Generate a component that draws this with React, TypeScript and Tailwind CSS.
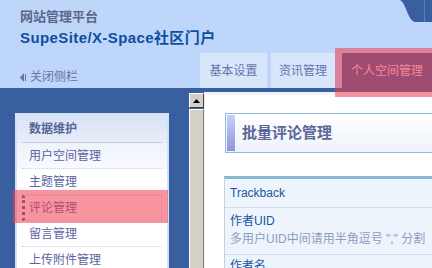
const font = "font-['Liberation_Sans','Noto_Sans_CJK_SC',sans-serif]";

const menu = [
  { label: "用户空间管理" },
  { label: "主题管理" },
  { label: "评论管理", active: true },
  { label: "留言管理" },
  { label: "上传附件管理" },
];

function Header() {
  return (
    <div className="h-[88px] bg-[#BED6FA] flex">
      <div className="w-[200px] shrink-0 pl-5 flex flex-col">
        <div className="pt-[9px] text-[13px] font-bold leading-[16px] text-[#5A6888]">
          网站管理平台
        </div>
        <div className="mt-[4px] text-[15px] font-bold leading-[18px] tracking-[0.4px] text-[#0E4FA2] whitespace-nowrap">
          SupeSite/X-Space社区门户
        </div>
        <div className="mt-auto mb-[3px] flex items-center gap-[3px] text-[12px] leading-[16px] text-[#6674A8]">
          <svg width="7" height="9" viewBox="0 0 7 9">
            <polygon points="4,0 4,9 0,4.5" fill="#6674A8" />
            <rect x="5" y="1" width="1" height="7" fill="#6674A8" />
          </svg>
          关闭侧栏
        </div>
      </div>
      <div className="flex-1 flex flex-col">
        <div className="h-[53px] flex justify-end">
          <svg width="32" height="23" viewBox="0 0 32 23">
            <path
              d="M0 0 C4 2 6 10 9 16 C11 20 13 22 16 22 L32 22 L32 0 Z"
              fill="#3A5FA0"
            />
            <rect x="24" y="0" width="1" height="22" fill="#5A7CBA" />
          </svg>
        </div>
        <div className="h-[35px] flex text-[12px] text-[#6674A8]">
          <div className="w-[67px] bg-[#D8E6FC] flex items-center justify-center">
            基本设置
          </div>
          <div className="ml-1 w-[64px] bg-[#D8E6FC] flex items-center justify-center">
            资讯管理
          </div>
          <div className="ml-[7px] flex-1 bg-[#3A5FA0] text-[#FFE0E8] flex items-center justify-center">
            个人空间管理
          </div>
        </div>
      </div>
    </div>
  );
}

function Sidebar() {
  return (
    <div className="w-[205px] shrink-0 bg-[#3A5FA0] flex">
      <div className="w-[189px] pl-[15px] pt-[21px]">
        <div className="w-[154px] h-[200px] border-2 border-[#D6E2F6] border-b-0 bg-white">
          <div className="h-[28px] bg-gradient-to-b from-[#D8E3F6] to-[#E8EEF9] px-[5px]">
            <div className="h-[28px] border-b border-[#C6CEDC] pl-[7px] flex items-center text-[12px] font-bold text-[#5A6498]">
              数据维护
            </div>
          </div>
          <div>
            {menu.map((m, i) => (
              <div
                key={m.label}
                className={
                  i === 0
                    ? "px-[5px] bg-gradient-to-b from-[#EEF3FB] to-[#F8FAFE]"
                    : "px-[5px]"
                }
              >
                {m.active ? (
                  <div className="h-[26px] border border-dotted border-[#D0D8E8] border-l-[3px] border-l-[#3A5FA0] pl-[4px] flex items-center text-[12px] text-[#5A64A0]">
                    {m.label}
                  </div>
                ) : (
                  <div className="h-[26px] border-b border-dotted border-[#CCD4E4] pl-[7px] flex items-center text-[12px] text-[#5A64A0]">
                    {m.label}
                  </div>
                )}
              </div>
            ))}
          </div>
        </div>
      </div>
      <div className="w-[15px] pt-[1px] flex flex-col">
        <div className="h-[15px] bg-[#D4D0C8] border border-t-white border-l-white border-r-[#404040] border-b-[#404040] flex items-center justify-center">
          <svg width="7" height="4" viewBox="0 0 7 4">
            <polygon points="3.5,0 7,4 0,4" fill="#000" />
          </svg>
        </div>
        <div className="flex-1 mt-[1px] bg-[#D4D0C8] border border-t-white border-l-white border-r-[#808080] border-b-0" />
      </div>
      <div className="w-[1px] bg-[#F0F0F0]" />
    </div>
  );
}

function Content() {
  return (
    <div className="flex-1 bg-white overflow-hidden">
      <div className="h-[3px] bg-[#F2F5FA]" />
      <div className="pl-[20px] pt-[18px]">
        <div className="w-[240px] h-[40px] border border-[#8DBDD6] p-[1px] flex bg-gradient-to-b from-white to-[#EEF2FC]">
          <div className="w-[8px] bg-gradient-to-b from-[#C8D0FA] to-[#8C96D8]" />
          <div className="pl-[7px] flex items-center text-[15px] font-bold text-[#5C6898]">
            批量评论管理
          </div>
        </div>
      </div>
      <div className="pl-[19px] pt-[23px]">
        <div className="w-[240px] border-t-[3px] border-[#86B8D2] border-l border-l-[#C4D0E2] bg-[#EEF4FC] text-[12px]">
          <div className="h-[29px] border-b border-[#D0DAE8] pl-[5px] flex items-center text-[#1A56A0]">
            Trackback
          </div>
          <div className="h-[47px] border-b border-[#D0DAE8] pl-[5px] pt-[5px]">
            <div className="leading-[16px] text-[#1A56A0]">作者UID</div>
            <div className="mt-[2px] leading-[16px] text-[#8C9CC0] whitespace-nowrap">
              多用户UID中间请用半角逗号 "," 分割
            </div>
          </div>
          <div className="h-[30px] pl-[5px] pt-[3px] leading-[16px] text-[#1A56A0]">
            作者名
          </div>
        </div>
      </div>
    </div>
  );
}

export default function App() {
  return (
    <div className={`relative w-[432px] h-[268px] overflow-hidden bg-white ${font}`}>
      <Header />
      <div className="h-[4px] bg-[#3A5FA0]" />
      <div className="flex h-[176px]">
        <Sidebar />
        <Content />
      </div>
      {/* highlight marks */}
      <div className="absolute left-[335px] top-[48px] w-[97px] h-[49px] bg-[rgba(242,60,78,0.55)]" />
      <div className="absolute left-[13px] top-[190px] w-[155px] h-[33px] bg-[rgba(242,60,78,0.55)]" />
    </div>
  );
}
